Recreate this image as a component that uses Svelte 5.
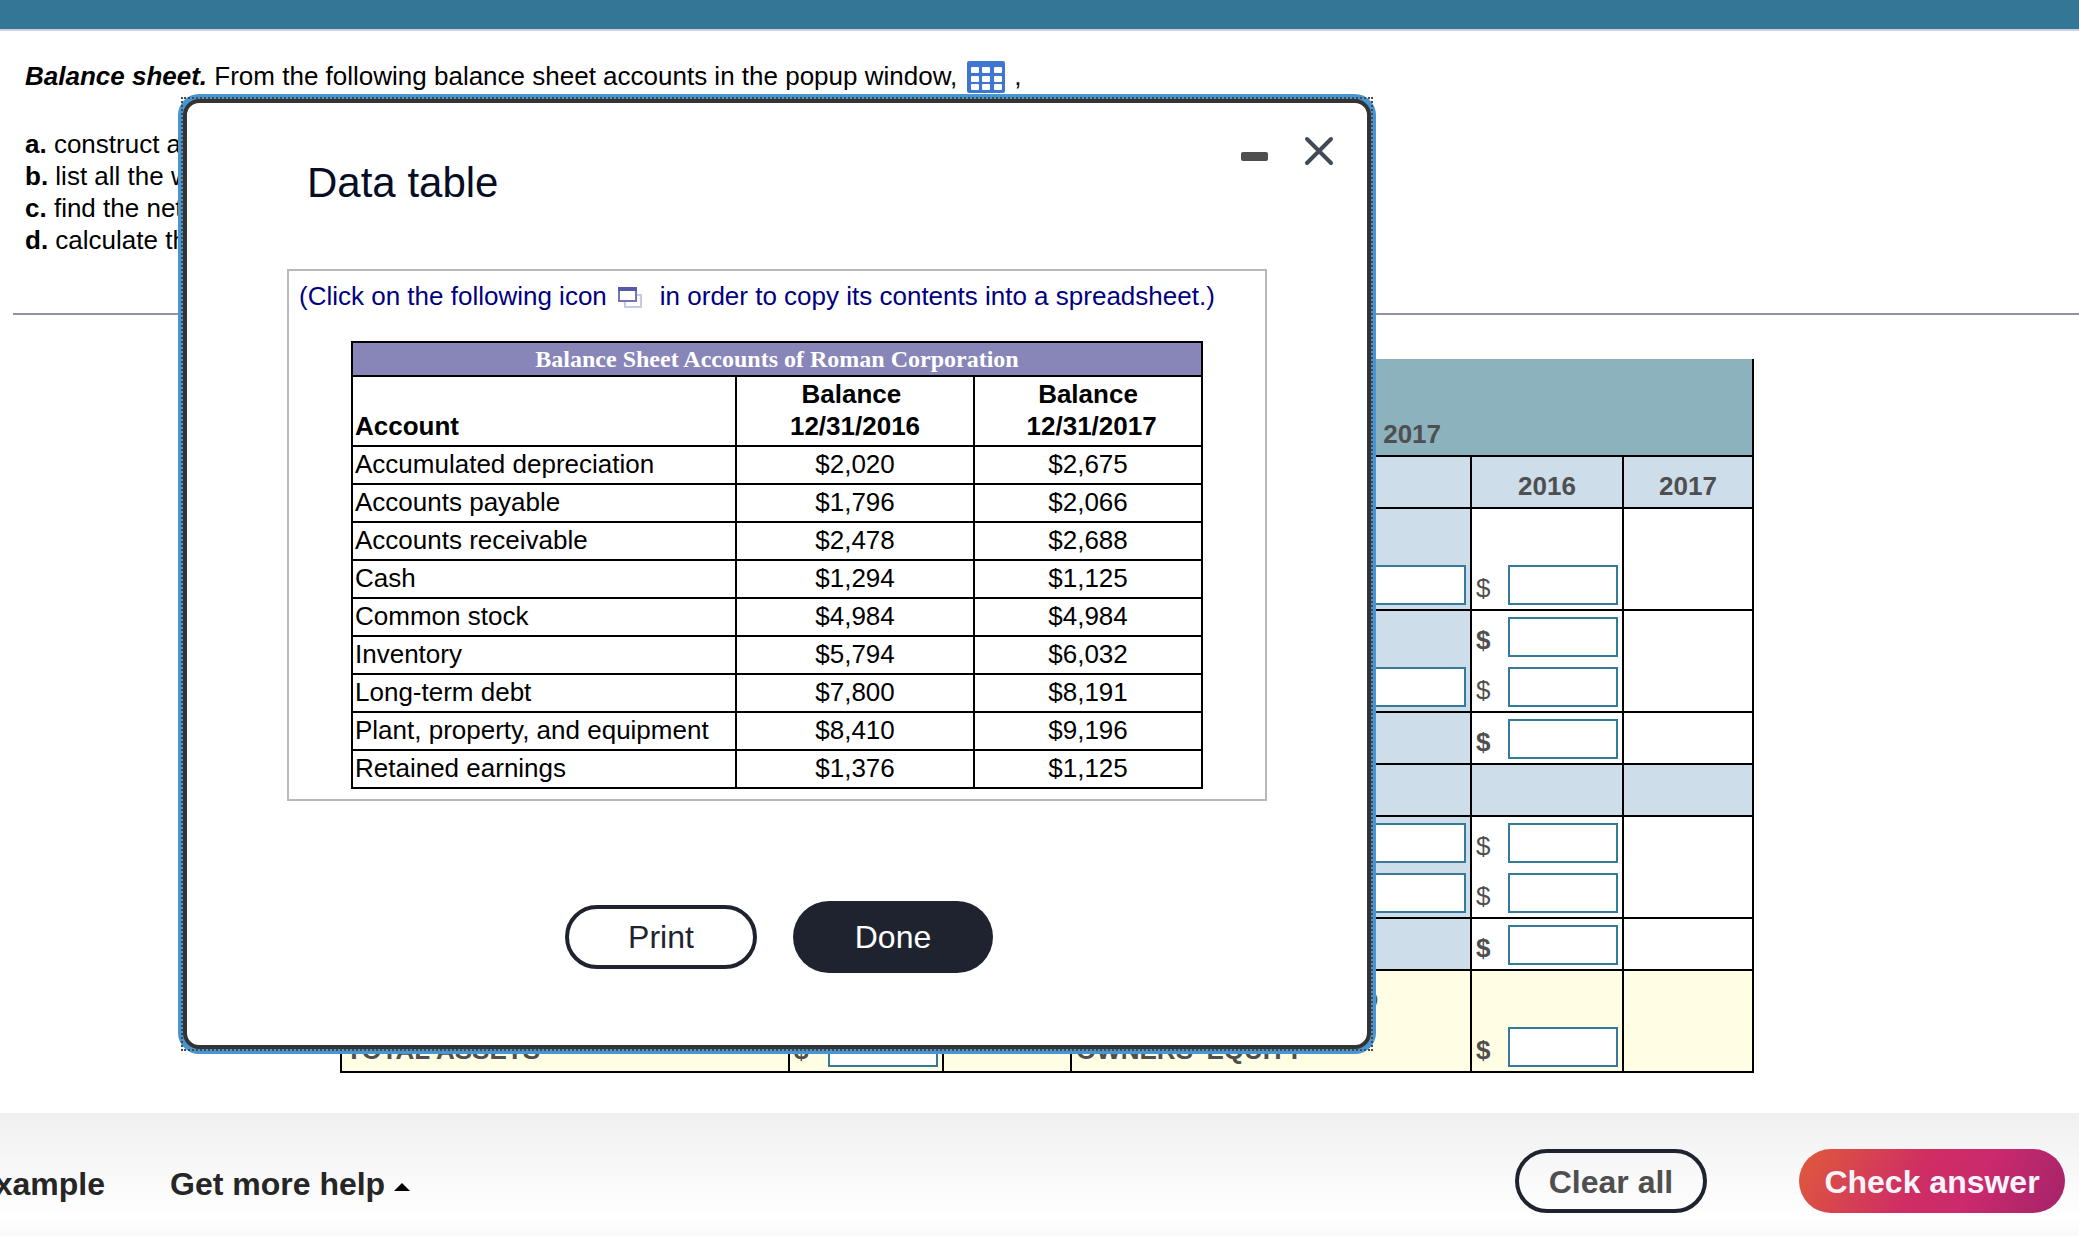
<script>
  let accounts = [
    { name: "Accumulated depreciation", first: "$2,020", second: "$2,675" },
    { name: "Accounts payable", first: "$1,796", second: "$2,066" },
    { name: "Accounts receivable", first: "$2,478", second: "$2,688" },
    { name: "Cash", first: "$1,294", second: "$1,125" },
    { name: "Common stock", first: "$4,984", second: "$4,984" },
    { name: "Inventory", first: "$5,794", second: "$6,032" },
    { name: "Long-term debt", first: "$7,800", second: "$8,191" },
    { name: "Plant, property, and equipment", first: "$8,410", second: "$9,196" },
    { name: "Retained earnings", first: "$1,376", second: "$1,125" },
  ];

  // Every row of the answer table is a stack of lines
  // pick: has an account field, amount: has a dollar field, bold: subtotal

  let rows = [
    [{}, { pick: true, amount: true }],
    [
      { amount: true, bold: true },
      { pick: true, amount: true },
    ],
    [{ amount: true, bold: true }],
    [{ heading: true }],
    [
      { pick: true, amount: true },
      { pick: true, amount: true },
    ],
    [{ amount: true, bold: true }],
  ];
</script>

{#snippet amountLine(line, label)}
  <div class="line" class:bold={line.bold}>
    {#if line.amount}
      <span>$</span>
      <input class="amount" type="text" aria-label={label} />
    {/if}
  </div>
{/snippet}

<div class="page">
  <header class="top-bar"></header>

  <main>
    <section class="problem">
      <p class="intro">
        <span
          ><strong><em>Balance sheet.</em></strong> From the following balance sheet
          accounts in the popup window,</span
        >
        <button class="grid-button" aria-label="Open data table">
          <svg width="38" height="32" viewBox="0 0 38 32">
            <rect width="38" height="32" rx="2" fill="#3f76d0" />
            {#each [6, 15, 23] as y}
              {#each [4, 15, 27] as x}
                <rect {x} {y} width="8" height="6" rx="1" fill="#ffffff" />
              {/each}
            {/each}
          </svg>
        </button>
        <span>,</span>
      </p>

      <ul class="tasks">
        <li><b>a.</b> construct a balance sheet</li>
        <li><b>b.</b> list all the working capital accounts</li>
        <li><b>c.</b> find the net working capital</li>
        <li><b>d.</b> calculate the change</li>
      </ul>
    </section>

    <hr />

    <section class="answer">
      <table class="answer-table">
        <colgroup>
          <col class="col-label" />
          <col class="col-assets-first" />
          <col class="col-assets-second" />
          <col class="col-liability" />
          <col class="col-liability-first" />
          <col class="col-liability-second" />
        </colgroup>
        <thead>
          <tr class="title-row">
            <th colspan="6"><div class="line">Balance Sheet 2016 and 2017</div></th>
          </tr>
          <tr class="blue center">
            <th></th>
            <th><div class="line">2016</div></th>
            <th><div class="line">2017</div></th>
            <th></th>
            <th><div class="line">2016</div></th>
            <th><div class="line">2017</div></th>
          </tr>
        </thead>
        <tbody>
          {#each rows as lines}
            <tr class:blue={lines[0].heading}>
              <td class="blue"></td>
              <td>
                {#each lines as line}
                  {@render amountLine(line, "Assets 2016")}
                {/each}
              </td>
              <td></td>
              <td class="blue">
                {#each lines as line}
                  <div class="line pick-line">
                    {#if line.pick}
                      <input class="pick" type="text" aria-label="Account" />
                    {/if}
                  </div>
                {/each}
              </td>
              <td>
                {#each lines as line}
                  {@render amountLine(line, "Liabilities 2016")}
                {/each}
              </td>
              <td></td>
            </tr>
          {/each}
          <tr class="total">
            <td><div class="line">TOTAL ASSETS</div></td>
            <td>{@render amountLine({ amount: true }, "Total assets 2016")}</td>
            <td></td>
            <td>
              <div class="line">TOTAL LIABILITIES AND</div>
              <div class="line">OWNERS' EQUITY</div>
            </td>
            <td>{@render amountLine({ amount: true }, "Total liabilities 2016")}</td>
            <td></td>
          </tr>
        </tbody>
      </table>
    </section>
  </main>

  <footer>
    <div class="example-clip"><a href="#example">View an example</a></div>
    <button class="help">
      Get more help
      <svg width="16" height="8" viewBox="0 0 16 8"><path d="M0 8L8 0L16 8Z" /></svg>
    </button>
    <div class="footer-actions">
      <button class="pill clear">Clear all</button>
      <button class="pill check">Check answer</button>
    </div>
  </footer>

  <div class="modal" role="dialog" aria-labelledby="modal-title">
    <div class="modal-header">
      <h2 id="modal-title">Data table</h2>
      <div class="controls">
        <button aria-label="Minimize">
          <svg width="28" height="32" viewBox="0 0 28 32">
            <rect y="17" width="27" height="9" rx="2" fill="#4f4f4f" />
          </svg>
        </button>
        <button aria-label="Close">
          <svg width="32" height="32" viewBox="0 0 32 32">
            <path
              d="M4 4L28 28M28 4L4 28"
              fill="none"
              stroke="#414b57"
              stroke-width="4"
              stroke-linecap="round"
            />
          </svg>
        </button>
      </div>
    </div>

    <div class="data-box">
      <p class="hint">
        <span>(Click on the following icon</span>
        <button aria-label="Copy to spreadsheet">
          <svg width="25" height="22" viewBox="0 0 25 22">
            <rect x="7" y="8" width="16" height="12" fill="#ffffff" stroke="#c5c9e4" stroke-width="2" />
            <rect x="1" y="2" width="17" height="12" fill="#ffffff" stroke="#7076b6" stroke-width="2" />
            <rect width="19" height="4" fill="#535ba5" />
          </svg>
        </button>
        <span>in order to copy its contents into a spreadsheet.)</span>
      </p>

      <table class="data-table">
        <colgroup>
          <col class="col-account" />
          <col class="col-first" />
          <col class="col-second" />
        </colgroup>
        <thead>
          <tr>
            <th class="data-title" colspan="3">
              Balance Sheet Accounts of Roman Corporation
            </th>
          </tr>
          <tr class="data-head">
            <th>Account</th>
            <th>Balance&nbsp;<br />12/31/2016</th>
            <th>Balance<br />&nbsp;12/31/2017</th>
          </tr>
        </thead>
        <tbody>
          {#each accounts as account}
            <tr>
              <td>{account.name}</td>
              <td>{account.first}</td>
              <td>{account.second}</td>
            </tr>
          {/each}
        </tbody>
      </table>
    </div>

    <div class="modal-buttons">
      <button class="pill print">Print</button>
      <button class="pill done">Done</button>
    </div>
  </div>
</div>

<style>
  :global(body) {
    margin: 0;
    background: #ffffff;
  }

  .page {
    position: relative;
    display: flex;
    flex-direction: column;
    min-height: 100vh;
    overflow: hidden;
    font-family: "Liberation Sans", Arial, sans-serif;
    font-size: 26px;
    line-height: 32px;
    color: #000000;
  }

  button {
    padding: 0;
    border: none;
    background: none;
    font-family: inherit;
    color: inherit;
    cursor: pointer;
  }

  svg {
    display: block;
  }

  input {
    box-sizing: border-box;
    height: 40px;
    padding: 0 4px;
    border: 2px solid #357a9b;
    border-radius: 0;
    background: #ffffff;
    font-family: inherit;
    font-size: 26px;
  }

  .top-bar {
    height: 29px;
    background: #347696;
    border-bottom: 2px solid #cdd0de;
  }

  main {
    flex: 1;
    padding-bottom: 40px;
  }

  /* Problem text */

  .problem {
    padding: 29px 25px 0;
  }

  .intro {
    display: flex;
    align-items: center;
    height: 32px;
    margin: 0 0 36px;
  }

  .grid-button {
    margin: 2px 9px 0 10px;
  }

  .tasks {
    margin: 0;
    padding: 0;
    list-style: none;
  }

  hr {
    height: 2px;
    margin: 57px 0 44px 13px;
    border: none;
    background: #8b93a5;
  }

  /* Answer table */

  .answer {
    padding-left: 15px;
  }

  .answer-table {
    width: 1414px;
    margin: 0 auto;
    border-collapse: collapse;
    table-layout: fixed;
    color: #4f4f4f;
  }

  .col-label {
    width: 448px;
  }

  .col-assets-first {
    width: 154px;
  }

  .col-assets-second {
    width: 128px;
  }

  .col-liability {
    width: 400px;
  }

  .col-liability-first {
    width: 152px;
  }

  .col-liability-second {
    width: 130px;
  }

  .answer-table th,
  .answer-table td {
    padding: 0;
    border: 2px solid #000000;
    vertical-align: bottom;
  }

  .answer-table .title-row th {
    height: 96px;
    border-top: none;
    background: #8cb2be;
  }

  .title-row .line {
    justify-content: flex-end;
    padding-right: 311px;
  }

  .blue {
    background: #cddde9;
  }

  .center .line {
    justify-content: center;
  }

  .line {
    box-sizing: border-box;
    display: flex;
    align-items: flex-end;
    justify-content: space-between;
    height: 50px;
    padding: 6px 4px 4px;
    line-height: 34px;
  }

  .bold,
  .total {
    font-weight: bold;
  }

  .amount {
    width: 110px;
  }

  .pick-line {
    justify-content: flex-end;
  }

  .pick {
    width: 300px;
  }

  .total {
    background: #fffde3;
  }

  /* Footer */

  footer {
    display: flex;
    align-items: center;
    padding: 36px 14px 23px 0;
    background: linear-gradient(#f0f0f0, #ffffff 85%, #f9f9f9);
    font-size: 32px;
    font-weight: bold;
    color: #262626;
  }

  .example-clip {
    display: flex;
    justify-content: flex-end;
    width: 105px;
    padding-top: 5px;
    overflow: hidden;
    white-space: nowrap;
    line-height: 40px;
  }

  .example-clip a {
    color: inherit;
    text-decoration: none;
  }

  .help {
    display: flex;
    align-items: center;
    gap: 9px;
    margin-left: 65px;
    padding-top: 5px;
    font-size: 32px;
    font-weight: bold;
    line-height: 40px;
  }

  .help svg {
    margin-top: 6px;
  }

  .footer-actions {
    display: flex;
    gap: 92px;
    margin-left: auto;
  }

  .pill {
    box-sizing: border-box;
    width: 192px;
    height: 64px;
    border-radius: 36px;
    font-size: 32px;
  }

  .clear,
  .print {
    border: 4px solid #1f232f;
  }

  .clear,
  .check {
    padding-top: 3px;
    font-weight: bold;
  }

  .clear {
    color: #4f4f4f;
  }

  .check {
    width: 266px;
    background: linear-gradient(120deg, #df5b3b, #cf2d64 45%, #cb2a6c 65%, #a3236b);
    color: #f6f4fb;
  }

  /* Data table window */

  .modal {
    position: absolute;
    top: 99px;
    left: 183px;
    box-sizing: border-box;
    width: 1188px;
    padding-bottom: 72px;
    border: 4px solid #333333;
    border-radius: 16px;
    background: #ffffff;
    box-shadow: 0 0 0 5px #4795d1;
  }

  /* Square dotted focus ring on top of the blue one */
  .modal::after {
    content: "";
    position: absolute;
    inset: -6px;
    border: 2px dotted #4a4a4a;
    pointer-events: none;
  }

  .modal-header {
    display: flex;
    justify-content: space-between;
    align-items: flex-start;
    padding: 32px 32px 0 120px;
  }

  h2 {
    margin: 24px 0 0;
    font-size: 42px;
    font-weight: normal;
    line-height: 48px;
    color: #060d24;
  }

  .controls {
    display: flex;
    gap: 34px;
  }

  .data-box {
    margin: 62px 100px 0;
    padding: 9px 10px 10px;
    border: 2px solid #b9b9b9;
  }

  .hint {
    display: flex;
    align-items: center;
    margin: 0 0 29px;
    color: #00007f;
  }

  .hint button {
    margin: 4px 17px 0 11px;
  }

  .data-table {
    width: 852px;
    margin: 0 auto;
    border-collapse: collapse;
    table-layout: fixed;
  }

  .col-account {
    width: 384px;
  }

  .col-first {
    width: 238px;
  }

  .col-second {
    width: 228px;
  }

  .data-table th,
  .data-table td {
    padding: 1px 2px 3px;
    border: 2px solid #000000;
    text-align: center;
    vertical-align: bottom;
  }

  .data-table td:first-child,
  .data-head th:first-child {
    text-align: left;
  }

  .data-table .data-title {
    padding: 2px;
    background: #8885b8;
    font-family: "Liberation Serif", "Times New Roman", serif;
    font-size: 24px;
    line-height: 28px;
    color: #ffffff;
  }

  .modal-buttons {
    display: flex;
    justify-content: center;
    align-items: center;
    gap: 36px;
    margin-top: 100px;
    padding-left: 4px;
  }

  .print {
    color: #1f232f;
  }

  .done {
    width: 200px;
    height: 72px;
    background: #1f232f;
    color: #ffffff;
  }
</style>
